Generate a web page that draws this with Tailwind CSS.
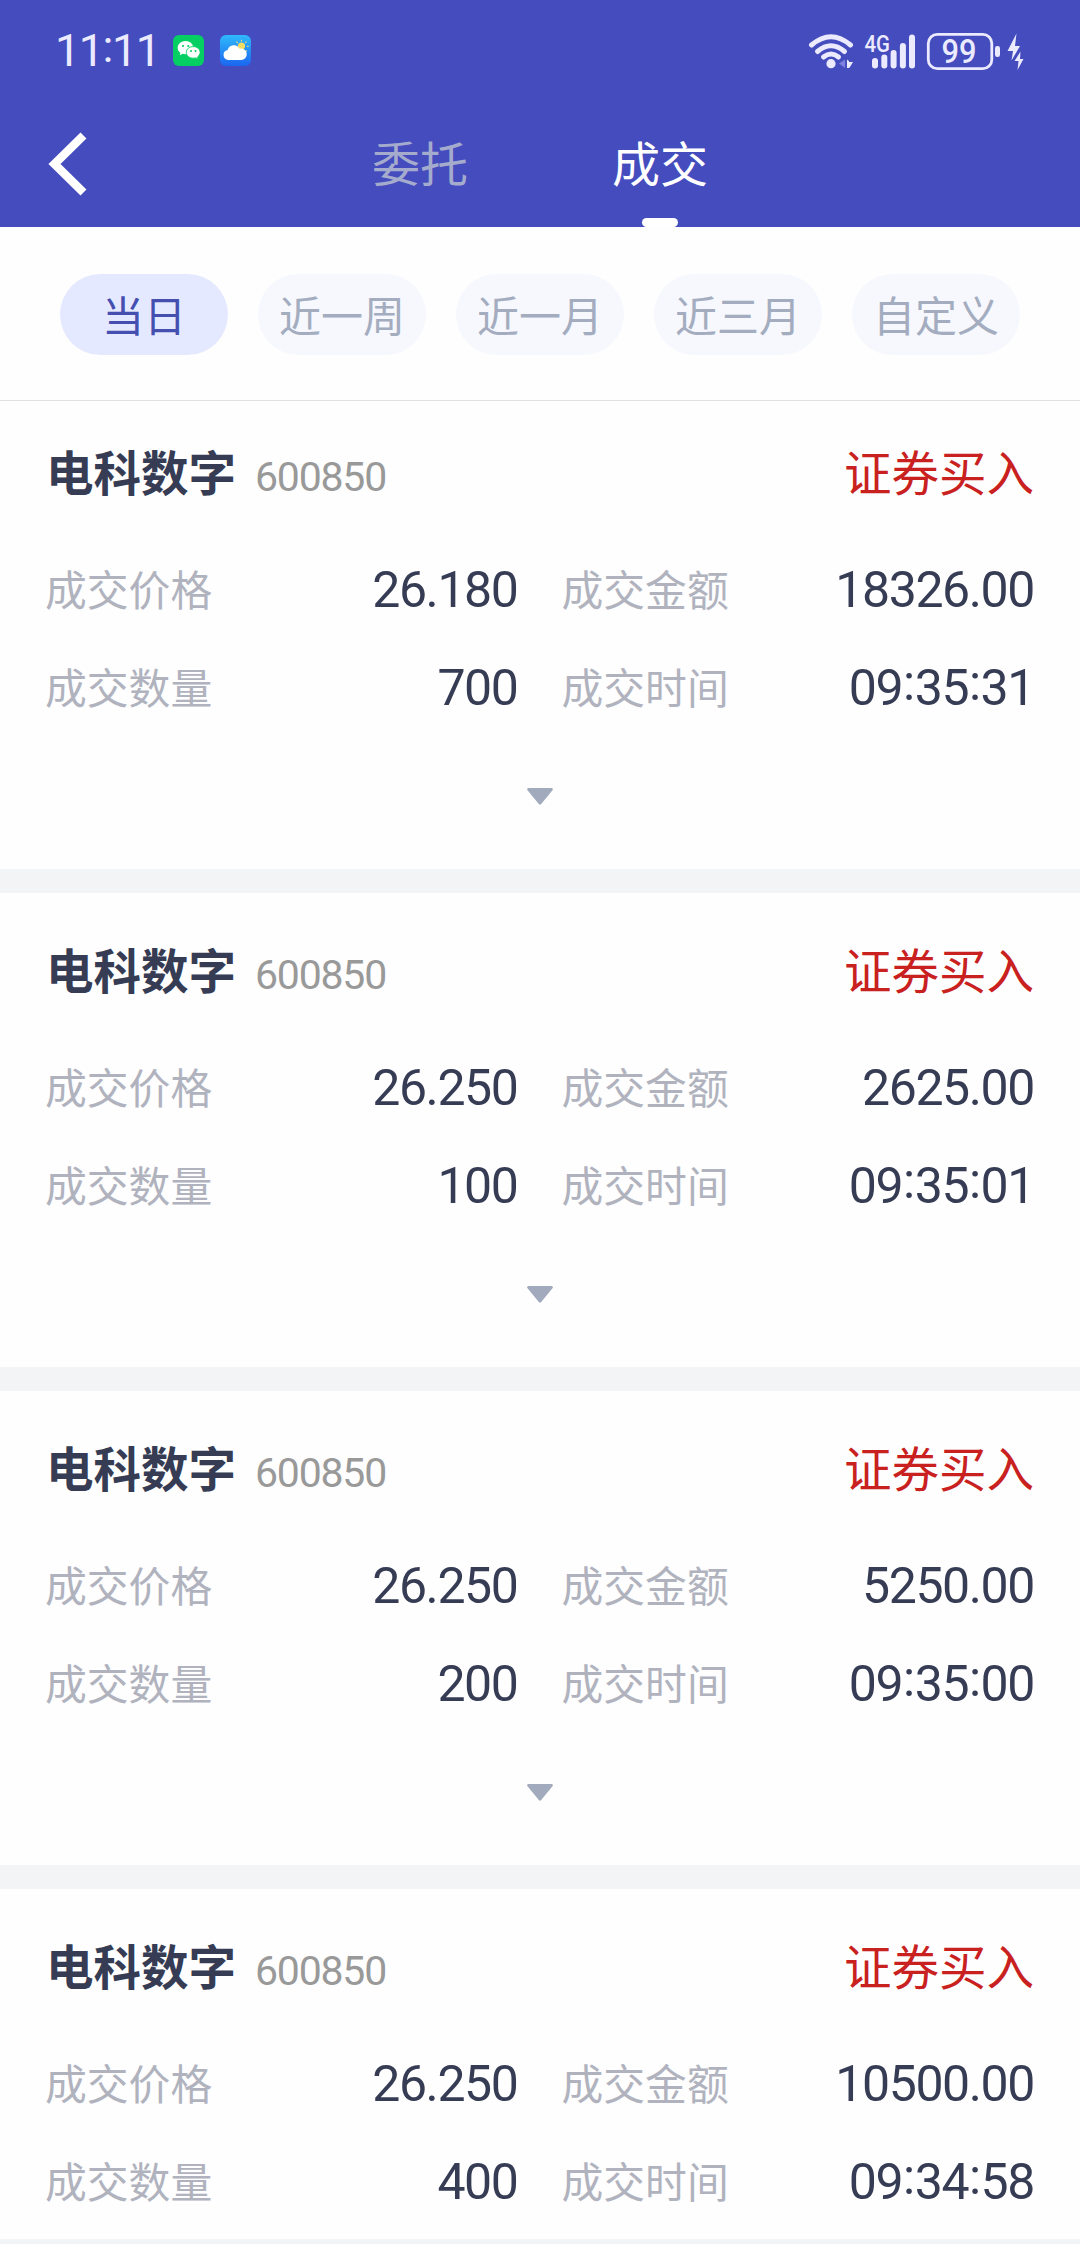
<!DOCTYPE html>
<html lang="zh-CN">
<head>
<meta charset="utf-8">
<title>成交</title>
<script src="https://cdn.jsdelivr.net/npm/@tailwindcss/browser@4"></script>
</head>
<body class="w-[1080px] h-[2244px] overflow-hidden bg-[#fefefe] font-['Noto_Sans_CJK_SC',sans-serif] flex flex-col">

<header class="bg-[#444cbe] h-[227px] shrink-0 flex flex-col">
  <div class="h-[102px] flex items-center justify-between pl-[55px] pr-[50px]">
    <div class="flex items-center">
      <span class="w-[118px] font-['Roboto',sans-serif] text-[45px] leading-[102px] tracking-[-1.5px] text-[#ebeaff]">11<span class="inline-block -translate-y-[4px]">:</span>11</span>
      <svg class="w-[31px] h-[31px] mt-[-1px]" viewBox="0 0 31 31">
        <rect width="31" height="31" rx="6" fill="#05cf62"/>
        <path d="M12.500 6C8 6 4.700 9 4.700 12.800c0 2.200 1 3.900 2.700 5.100l-.6 2.400 2.900-1.500c.9.200 1.800.4 2.800.4 4.500 0 7.800-2.800 7.800-6.400S17 6 12.500 6z" fill="#fff"/>
        <path d="M20.300 11.600c-4 0-7 2.500-7 5.800s3 5.800 7 5.800c.8 0 1.600-.1 2.300-.3l2.500 1.300-.6-2.200c1.600-1.100 2.600-2.700 2.600-4.600 0-3.300-3-5.800-6.800-5.800z" fill="#fff" stroke="#05cf62" stroke-width=".9"/>
        <g fill="#05cf62"><circle cx="10" cy="11" r="1.100"/><circle cx="15.300" cy="11" r="1.100"/><circle cx="18" cy="16" r="1"/><circle cx="22.500" cy="16" r="1"/></g>
      </svg>
      <svg class="w-[31px] h-[31px] mt-[-1px] ml-4" viewBox="0 0 31 31">
        <defs><linearGradient id="sky" x1="0" y1="0" x2="0" y2="1"><stop offset="0" stop-color="#2fb9fb"/><stop offset="1" stop-color="#1b66f0"/></linearGradient></defs>
        <rect width="31" height="31" rx="6" fill="url(#sky)"/>
        <circle cx="21.500" cy="11" r="3.600" fill="#f3dc62"/>
        <g stroke="#e8dc7c" stroke-width="1.200" stroke-linecap="round"><path d="M21.500 5.300v.8M16.800 7l.6.6M26.200 6.800l-.6.6M27.400 11.300h.8M26 15.600l.5.500"/></g>
        <path d="M8.300 25a5 5 0 0 1-.7-9.900 6.400 6.400 0 0 1 12-1.300 5.700 5.700 0 1 1 1.200 11.200z" fill="#fff"/>
      </svg>
    </div>
    <svg class="w-[230px] h-[50px]" viewBox="800 25 230 50" fill="none">
      <g stroke="#ebeaff" stroke-width="5" stroke-linecap="round">
        <path d="M811.500 44Q831 27.500 850.500 44"/><path d="M817.500 50.500Q831 39 844.500 50.500"/><path d="M823.500 56Q831 50 838.500 56"/>
      </g>
      <circle cx="831" cy="62.700" r="4.600" fill="#ebeaff"/>
      <path d="M845 58.500v8.500l-6-4.500z" fill="#7d80dd"/>
      <path d="M847 58.500l2 1.500v1h4l-3 5-1 1h-2z" fill="#ebeaff"/>
      <text x="864.500" y="50.500" font-family="Roboto" font-size="23" font-weight="500" textLength="25.500" lengthAdjust="spacingAndGlyphs" fill="#ebeaff">4G</text>
      <g fill="#ebeaff">
        <rect x="872" y="57" width="6" height="10.500" rx="3"/><rect x="881.300" y="53.500" width="6" height="14" rx="3"/><rect x="890.600" y="49" width="6" height="18.500" rx="3"/><rect x="899.900" y="42" width="6" height="25.500" rx="3"/><rect x="909" y="33.500" width="6" height="34" rx="3"/>
        <rect x="995" y="45" width="5" height="11" rx="2.300"/>
        <path d="M1016.500 32.500L1007.500 50h5.500l-1.500 9.500L1020 45h-5z"/>
        <path d="M1020.500 50.500L1014.500 60h4l-1 9 6-11h-3.500z"/>
      </g>
      <rect x="928.300" y="33.300" width="63.500" height="34.400" rx="9" stroke="#ebeaff" stroke-width="2.800"/>
      <text x="941.500" y="62" font-family="Roboto" font-size="33" font-weight="500" textLength="35" lengthAdjust="spacingAndGlyphs" fill="#ebeaff">99</text>
    </svg>
  </div>
  <div class="h-[125px] grid grid-cols-[300px_240px_240px_300px]">
    <div class="pl-[48px] pt-[30px]">
      <svg class="w-10 h-[64px]" viewBox="0 0 40 64" fill="none"><path d="M35.500 3.500L6.500 32l29 28.500" stroke="#fff" stroke-width="8.500"/></svg>
    </div>
    <div class="flex justify-center text-[48px] leading-[119px] text-[#a5abcd]">委托</div>
    <div class="flex flex-col items-center text-white">
      <span class="h-[116px] text-[48px] leading-[119px]">成交</span>
      <span class="w-[36px] h-[9px] rounded-full bg-white"></span>
    </div>
  </div>
</header>

<nav class="h-[174px] shrink-0 border-b border-[#e2e2e2] flex gap-[30px] px-[60px] pt-[47px] text-[42px] leading-[79px] text-center text-[#a4adbf]">
  <span class="w-[168px] h-[81px] rounded-full bg-[#e5e9ff] text-[#444fb0]">当日</span>
  <span class="w-[168px] h-[81px] rounded-full bg-[#f6f8fd]">近一周</span>
  <span class="w-[168px] h-[81px] rounded-full bg-[#f6f8fd]">近一月</span>
  <span class="w-[168px] h-[81px] rounded-full bg-[#f6f8fd]">近三月</span>
  <span class="w-[168px] h-[81px] rounded-full bg-[#f6f8fd]">自定义</span>
</nav>

<main id="list" class="h-[1838px] shrink-0 overflow-hidden flex flex-col justify-start">
  <div class="h-0 -mt-[6px] shrink-0"></div>
</main>
<footer class="flex-1 bg-[#f2f4f6]"></footer>

<script>
const trades = [
  ['26.180', '18326.00', '700', '09:35:31'],
  ['26.250', '2625.00', '100', '09:35:01'],
  ['26.250', '5250.00', '200', '09:35:00'],
  ['26.250', '10500.00', '400', '09:34:58'],
];
// Colons are lifted to the middle of the digits.
const clock = (time) => time.replaceAll(':', '<span class="inline-block w-[12.5px] text-center -translate-y-[5px]">:</span>');
const cell = (label, value) => `
  <div class="flex items-start justify-between h-[98px]">
    <span class="text-[41.8px] leading-[93px] text-[#b0b3be]">${label}</span>
    <span class="font-['Roboto',sans-serif] text-[50px] leading-[97px] tracking-[-1.4px] text-[#363c54]">${value}</span>
  </div>`;
document.getElementById('list').insertAdjacentHTML('beforeend', trades.map(([price, amount, qty, time]) => `
  <section class="h-[498px] shrink-0 border-b-[24px] border-[#f2f4f6]">
    <div class="h-[147px] flex items-center justify-between pl-[46px] pr-[46px] pt-[5px]">
      <div class="flex items-center">
        <span class="w-[209px] text-[47.5px] leading-[70px] font-bold text-[#363c54]">电科数字</span>
        <span class="font-['Roboto',sans-serif] text-[41px] leading-[70px] pt-[11px] tracking-[-1.2px] text-[#999]">600850</span>
      </div>
      <span class="text-[47.5px] leading-[70px] text-[#c92020]">证券买入</span>
    </div>
    <div class="grid grid-cols-2 gap-x-[44px] pl-[45px] pr-[46px]">
      ${cell('成交价格', price)}${cell('成交金额', amount)}${cell('成交数量', qty)}${cell('成交时间', clock(time))}
    </div>
    <div class="flex justify-center pt-[50px]">
      <svg class="w-[26px] h-[17px]" viewBox="0 0 26 17"><path d="M1 0h24q1.500 1 .5 2.300L14.200 16q-1.200 1.500-2.400 0L.5 2.300Q-.5 1 1 0z" fill="#a2abbd"/></svg>
    </div>
  </section>`).join(''));
</script>
</body>
</html>
